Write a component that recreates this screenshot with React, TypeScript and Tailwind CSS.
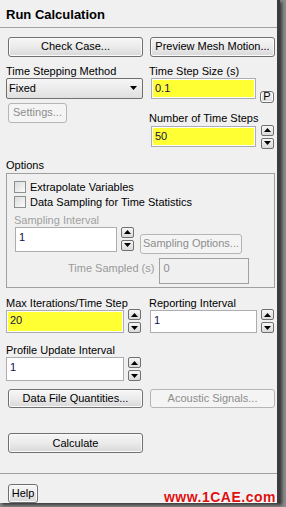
import type { ReactNode } from 'react';

const font = { fontFamily: '"Liberation Sans", Arial, sans-serif' };

type BtnProps = { children: ReactNode; className?: string; disabled?: boolean };

const Btn = ({ children, className = '', disabled }: BtnProps) => (
  <div
    className={
      'flex items-center justify-center rounded-[3px] border text-[11px] leading-none ' +
      (disabled
        ? 'border-[#b5b5b5] bg-[#f4f4f4] text-[#8d8d8d] '
        : 'border-[#707070] bg-gradient-to-b from-[#f6f6f6] via-[#ebebeb] to-[#d8d8d8] text-black shadow-[inset_0_0_0_1px_#fbfbfb] ') +
      className
    }
  >
    {children}
  </div>
);

const Arrow = ({ up }: { up?: boolean }) => (
  <div className="flex h-[11px] w-[13px] items-center justify-center rounded-[2px] border border-[#707070] bg-gradient-to-b from-[#f6f6f6] to-[#dadada]">
    <svg width="7" height="4" viewBox="0 0 7 4">
      {up ? <path d="M0 4 L3.5 0 L7 4 Z" fill="#000" /> : <path d="M0 0 L3.5 4 L7 0 Z" fill="#000" />}
    </svg>
  </div>
);

const Spin = () => (
  <div className="flex flex-col gap-[2px]">
    <Arrow up />
    <Arrow />
  </div>
);

type FieldProps = { value: string; yellow?: boolean; className?: string; disabled?: boolean };

const Field = ({ value, yellow, className = '', disabled }: FieldProps) => (
  <div
    className={
      'border p-[1px] ' +
      (disabled ? 'border-[#a0a0a0] bg-[#f0f0f0] ' : 'border-[#abadb3] bg-white ') +
      className
    }
  >
    <div
      className={
        'h-full w-full px-[2px] pt-[2px] text-[11px] leading-[13px] ' +
        (yellow ? 'bg-[#ffff33] text-[#10104a]' : disabled ? 'text-[#8d8d8d]' : 'text-[#10104a]')
      }
    >
      {value}
    </div>
  </div>
);

const Check = ({ label }: { label: string }) => (
  <div className="flex h-[15px] items-center gap-[4px]">
    <div className="h-[12px] w-[12px] border border-[#8e8f8f] bg-gradient-to-br from-[#dcdcdc] to-[#fbfbfb]" />
    <span className="text-[11px] text-black">{label}</span>
  </div>
);

export default function App() {
  return (
    <div className="h-[507px] w-[286px] bg-[#8a8a8a]" style={font}>
      <div className="flex h-[503px] w-[280px] flex-col border-r-[3px] border-[#3c3c3c] bg-[#f0f0f0] text-[11px] text-black shadow-[2px_2px_3px_rgba(0,0,0,0.6)]">
        {/* Title */}
        <div className="h-[28px] border-b border-[#a0a0a0] pl-[6px] pt-[7px] text-[13px] font-bold leading-[15px]">
          Run Calculation
        </div>

        {/* Time stepping */}
        <div className="mt-[9px] grid grid-cols-[137px_126px] gap-x-[6px] pl-[6px]">
          <div className="flex flex-col">
            <Btn className="ml-[2px] h-[20px] w-[135px]">Check Case...</Btn>
            <div className="mt-[7px] h-[14px] leading-[14px]">Time Stepping Method</div>
            <div className="flex h-[21px] w-[137px] items-center justify-between rounded-[2px] border border-[#707070] bg-gradient-to-b from-[#f6f6f6] to-[#e0e0e0] pl-[2px] pr-[5px]">
              <span>Fixed</span>
              <svg width="7" height="4" viewBox="0 0 7 4">
                <path d="M0 0 L3.5 4 L7 0 Z" fill="#000" />
              </svg>
            </div>
            <Btn disabled className="ml-[2px] mt-[4px] h-[20px] w-[59px]">Settings...</Btn>
          </div>
          <div className="flex flex-col">
            <Btn className="ml-[1px] h-[20px] w-[125px]">Preview Mesh Motion...</Btn>
            <div className="mt-[7px] h-[14px] leading-[14px]">Time Step Size (s)</div>
            <div className="flex items-end gap-[4px] pl-[2px]">
              <Field value="0.1" yellow className="h-[21px] w-[105px]" />
              <Btn className="mb-[-4px] h-[12px] w-[14px] text-[10px]">P</Btn>
            </div>
            <div className="mt-[12px] h-[14px] leading-[14px]">Number of Time Steps</div>
            <div className="flex items-center gap-[5px] pl-[2px]">
              <Field value="50" yellow className="h-[21px] w-[105px]" />
              <Spin />
            </div>
          </div>
        </div>

        {/* Options */}
        <div className="mt-[9px] h-[14px] pl-[6px] leading-[14px]">Options</div>
        <div className="ml-[6px] mt-[1px] flex h-[118px] w-[269px] flex-col border border-[#a0a0a0] pl-[7px] pt-[6px]">
          <Check label="Extrapolate Variables" />
          <Check label="Data Sampling for Time Statistics" />
          <div className="mt-[3px] h-[14px] leading-[14px] text-[#a0a0a0]">Sampling Interval</div>
          <div className="flex items-end">
            <Field value="1" className="ml-[1px] h-[25px] w-[102px]" />
            <div className="mb-[1px] ml-[4px]">
              <Spin />
            </div>
            <Btn disabled className="mb-[-2px] ml-[6px] h-[20px] w-[102px]">Sampling Options...</Btn>
          </div>
          <div className="mt-[6px] flex items-start">
            <span className="ml-[54px] mt-[2px] text-[#9a9a9a]">Time Sampled (s)</span>
            <Field value="0" disabled className="ml-[5px] h-[26px] w-[90px]" />
          </div>
        </div>

        {/* Iterations */}
        <div className="mt-[9px] grid grid-cols-[137px_126px] gap-x-[6px] pl-[6px]">
          <div className="flex flex-col">
            <div className="h-[12px] leading-[12px]">Max Iterations/Time Step</div>
            <div className="flex items-center gap-[4px]">
              <Field value="20" yellow className="h-[23px] w-[118px]" />
              <Spin />
            </div>
            <div className="mt-[11px] h-[13px] leading-[13px]">Profile Update Interval</div>
            <div className="flex items-center gap-[4px]">
              <Field value="1" className="h-[24px] w-[118px]" />
              <Spin />
            </div>
          </div>
          <div className="flex flex-col">
            <div className="h-[12px] leading-[12px]">Reporting Interval</div>
            <div className="flex items-center gap-[4px] pl-[1px]">
              <Field value="1" className="h-[23px] w-[107px]" />
              <Spin />
            </div>
          </div>
        </div>

        <div className="mt-[8px] grid grid-cols-[137px_126px] gap-x-[6px] pl-[6px]">
          <Btn className="ml-[2px] h-[19px] w-[135px]">Data File Quantities...</Btn>
          <Btn disabled className="ml-[1px] h-[19px] w-[125px]">Acoustic Signals...</Btn>
        </div>

        <Btn className="ml-[8px] mt-[25px] h-[20px] w-[135px]">Calculate</Btn>

        <div className="mt-[20px] w-[277px] border-t border-[#a0a0a0]" />

        <div className="mt-[10px] flex items-end justify-between pl-[8px] pr-[1px]">
          <Btn className="h-[19px] w-[30px]">Help</Btn>
          <span className="mb-[-5px] text-[14px] font-bold tracking-[0.5px] text-[#e01010] [text-shadow:1px_1px_0_#ffffff]">
            www.1CAE.com
          </span>
        </div>
      </div>
    </div>
  );
}
